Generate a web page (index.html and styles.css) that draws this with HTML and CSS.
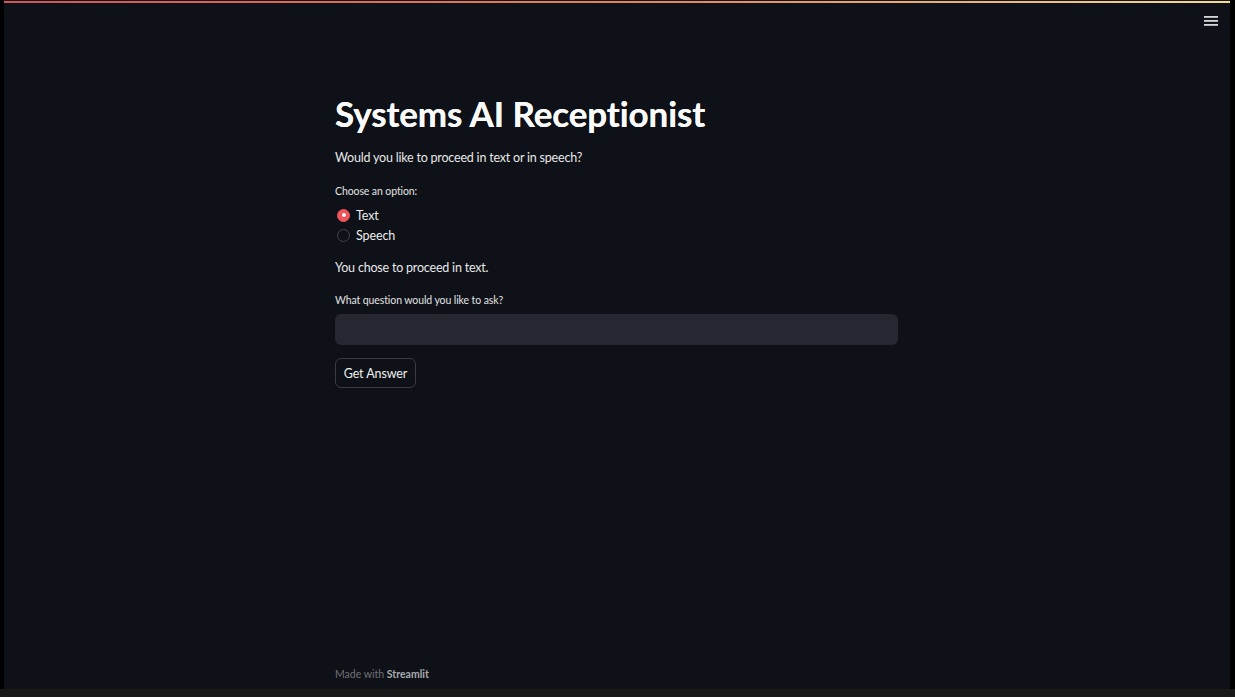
FILE: index.html
```html
<!DOCTYPE html>
<html lang="en">
<head>
<meta charset="utf-8">
<title>Systems AI Receptionist</title>
<link rel="stylesheet" href="styles.css">
</head>
<body>
<div class="screen">
  <div class="app">
    <div class="decoration"></div>
    <header class="header">
      <button class="menu" aria-label="Menu">
        <svg width="14" height="10" viewBox="0 0 14 10"><rect x="0" y="0" width="14" height="1.8" fill="#d6d6d6"/><rect x="0" y="4" width="14" height="1.8" fill="#d6d6d6"/><rect x="0" y="8" width="14" height="1.8" fill="#d6d6d6"/></svg>
      </button>
    </header>
    <main class="main">
      <div class="block">
        <h1 class="title">Systems AI Receptionist</h1>
        <p class="para para-first">Would you like to proceed in text or in speech?</p>
        <div class="label label-radio">Choose an option:</div>
        <div class="radios">
          <div class="radio"><span class="dot on"></span><span>Text</span></div>
          <div class="radio"><span class="dot"></span><span>Speech</span></div>
        </div>
        <p class="para para-chose">You chose to proceed in text.</p>
        <div class="label label-input">What question would you like to ask?</div>
        <div class="input"></div>
        <button class="btn">Get Answer</button>
      </div>
    </main>
    <footer class="footer">
      <div class="block">Made with <span class="brand">Streamlit</span></div>
    </footer>
  </div>
  <div class="bottom"></div>
</div>
</body>
</html>
```

FILE: styles.css
```css
* { box-sizing: border-box; }
html, body { margin: 0; padding: 0; background: #000; }
body { font-family: "Lato", "Open Sans", sans-serif; color: #fafafa; }

.screen {
  width: 1235px;
  height: 697px;
  display: flex;
  flex-direction: column;
  background: #000;
  overflow: hidden;
}
.app {
  margin-left: 4px;
  width: 1226px;
  height: 689px;
  background: #0e1117;
  display: flex;
  flex-direction: column;
}
.bottom {
  height: 8px;
  background: #19191a;
}
.decoration {
  height: 3px;
  background: linear-gradient(90deg, #cf565b 0%, #e0895e 55%, #f1dd96 100%);
  border-top: 1px solid #1a1416;
}
.header {
  height: 32px;
  display: flex;
  justify-content: flex-end;
  align-items: flex-start;
}
.menu {
  background: none;
  border: 0;
  padding: 0;
  margin: 13px 12px 0 0;
  width: 14px;
  height: 10px;
  display: block;
  line-height: 0;
}
.main {
  flex: 1;
  display: flex;
  justify-content: center;
}
.block {
  width: 564px;
}
.title {
  margin: 58px 0 0 0;
  font-size: 35px;
  line-height: 40px;
  font-weight: 700;
  color: #fafafa;
  letter-spacing: -0.1px;
  text-shadow: 0 0 0.4px #fafafa;
}
.para {
  margin: 13px 0 0 0;
  font-size: 12.5px;
  letter-spacing: -0.2px;
  line-height: 20px;
  color: #e8e8e8;
}
.para-first { margin-top: 15px; }
.label {
  font-size: 10.5px;
  letter-spacing: -0.1px;
  line-height: 16px;
  color: #e3e3e3;
}
.label-radio { margin-top: 15px; }
.radios {
  margin-top: 6px;
  display: flex;
  flex-direction: column;
}
.radio {
  height: 20px;
  display: flex;
  align-items: center;
  gap: 6px;
  padding-left: 2px;
  font-size: 12.5px;
  letter-spacing: -0.1px;
  color: #ececec;
}
.dot {
  width: 13px;
  height: 13px;
  border-radius: 50%;
  border: 1px solid #44464e;
  background: #0e1117;
  display: inline-block;
  position: relative;
}
.dot.on {
  background: #f0545a;
  border-color: #f0545a;
}
.dot.on::after {
  content: "";
  position: absolute;
  left: 3.5px;
  top: 3.5px;
  width: 4px;
  height: 4px;
  border-radius: 50%;
  background: #fafafa;
}
.para-chose { margin-top: 13px; }
.label-input { margin-top: 14px; }
.input {
  margin-top: 6px;
  width: 563px;
  height: 31px;
  border-radius: 6px;
  background: #262730;
}
.btn {
  margin-top: 13px;
  height: 30px;
  width: 81px;
  border-radius: 6px;
  border: 1px solid #3a3c42;
  background: #0e1117;
  color: #f0f0f0;
  font-family: inherit;
  font-size: 12.5px;
  letter-spacing: -0.1px;
  padding: 0;
  display: block;
}
.footer {
  height: 32px;
  padding-top: 9px;
  display: flex;
  justify-content: center;
  font-size: 10.5px;
  line-height: 16px;
  color: #6f7176;
}
.brand { color: #a8aaae; font-weight: 700; }
```
